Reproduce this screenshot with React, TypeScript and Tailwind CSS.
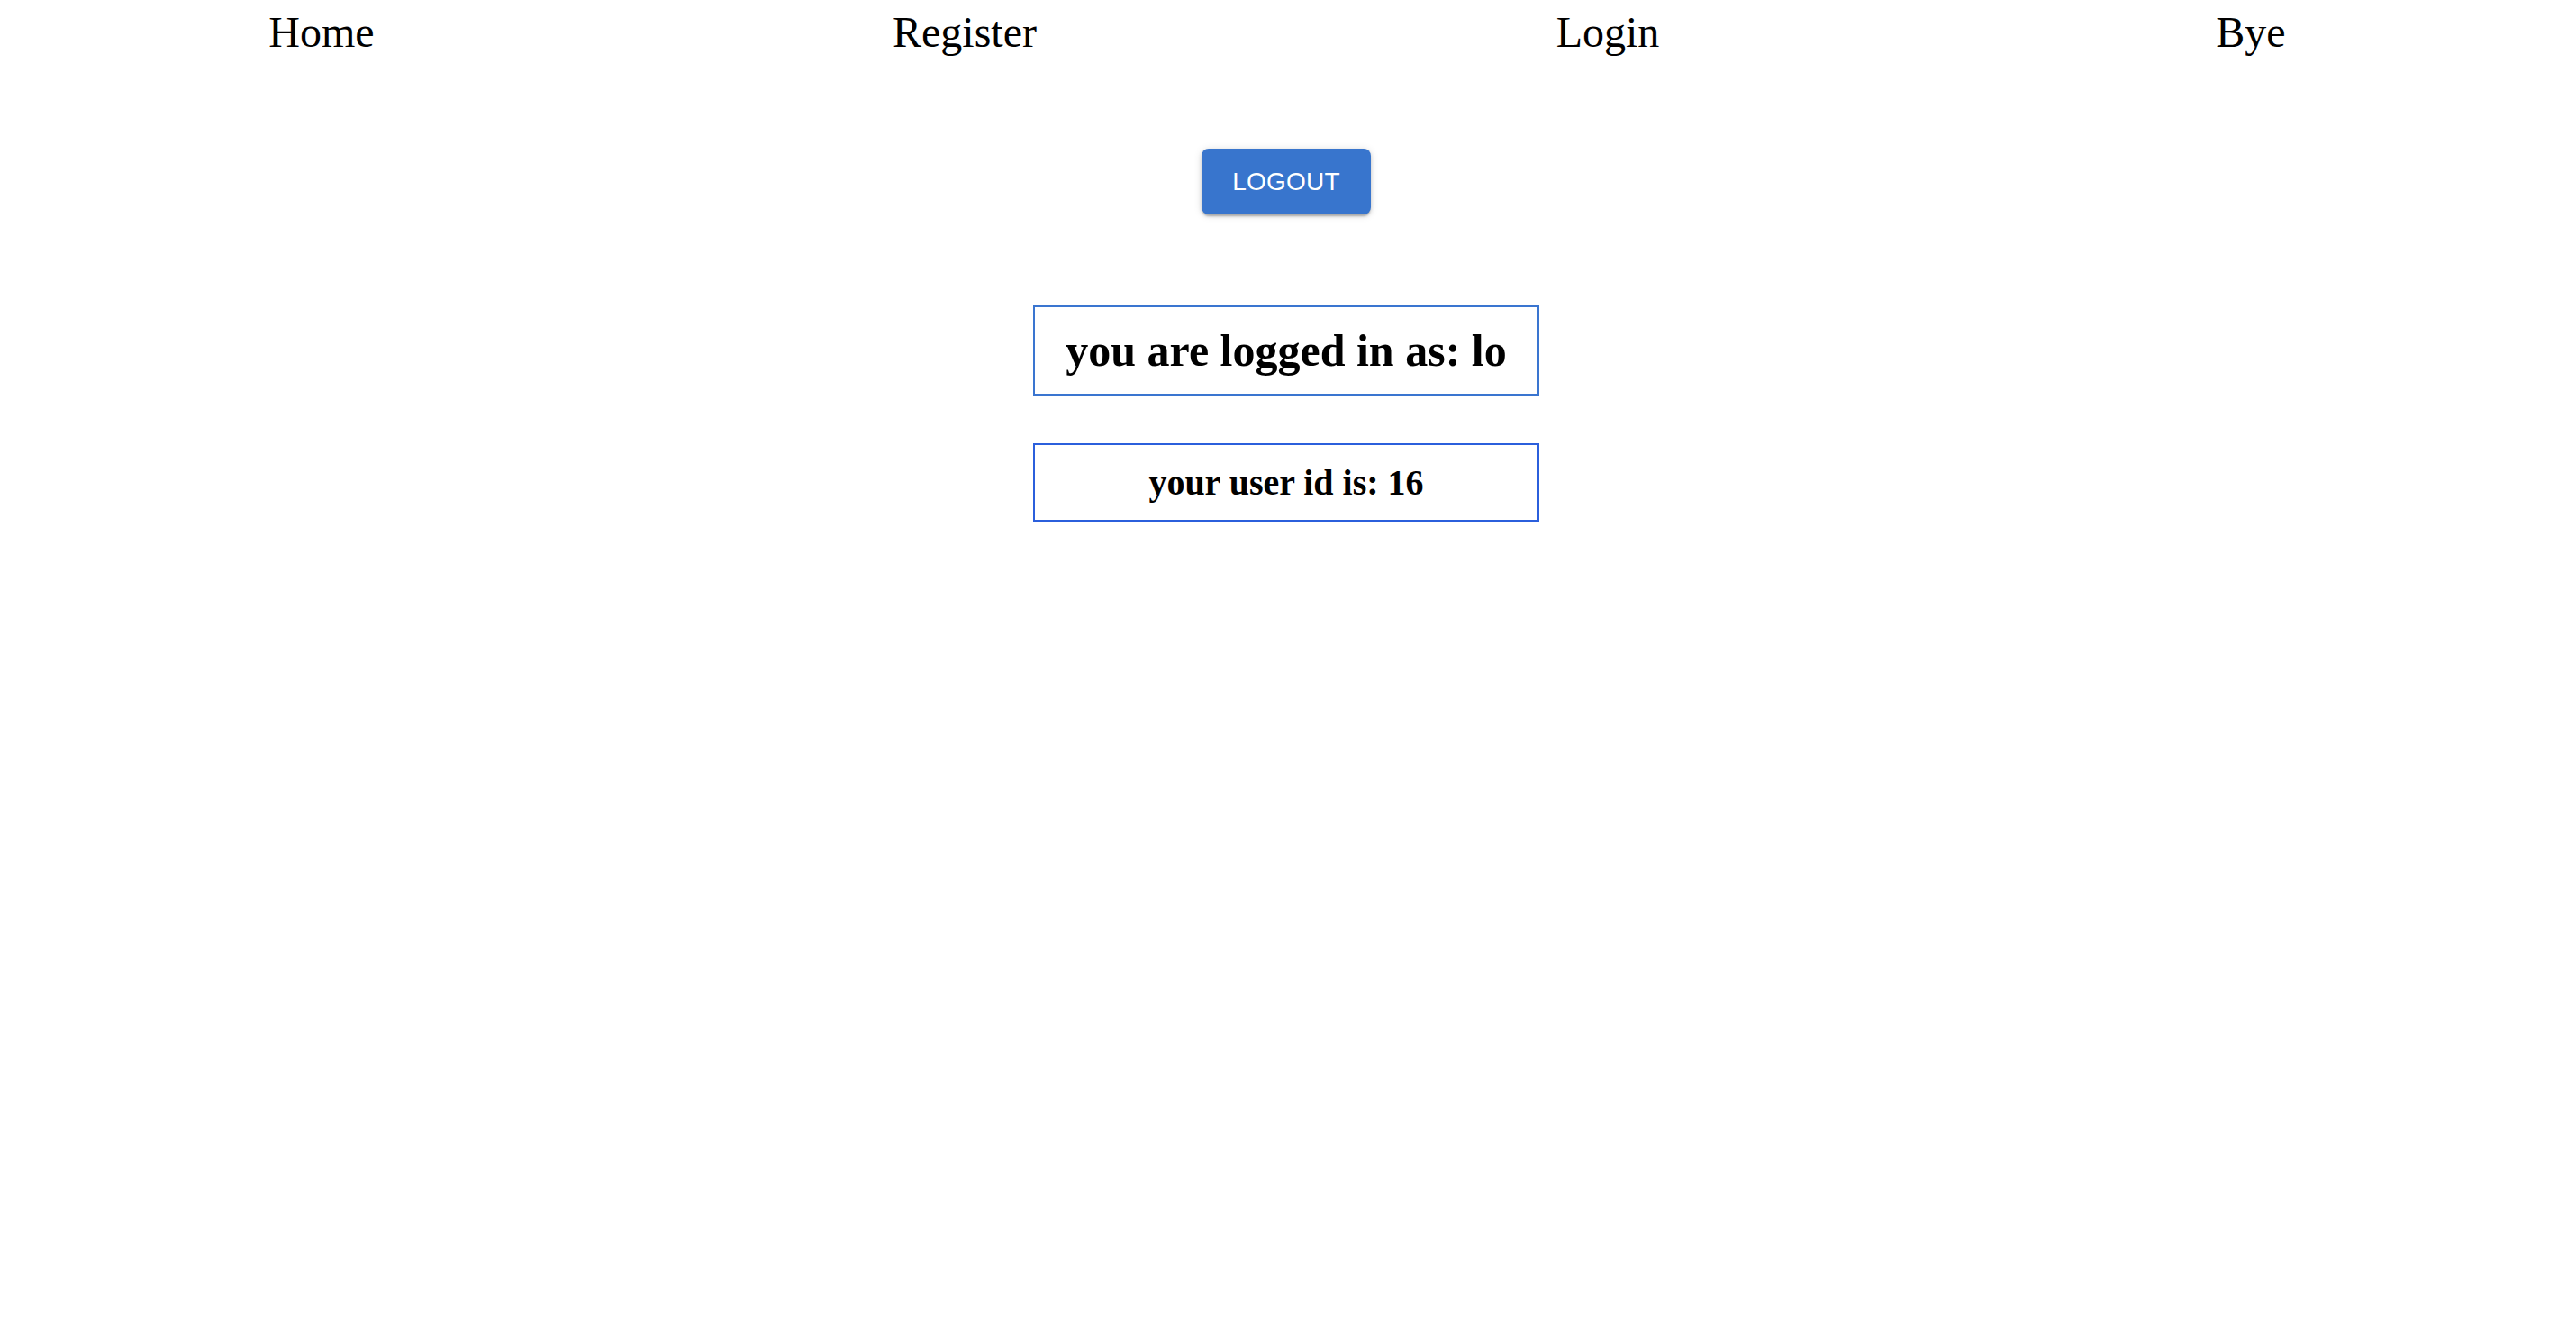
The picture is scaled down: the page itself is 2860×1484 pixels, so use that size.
export default function App() {
  const links = ["Home", "Register", "Login", "Bye"];

  return (
    <div className="min-h-screen bg-white pr-[4px] text-black">
      {/* NAV */}
      <nav className="grid grid-cols-4 pt-2 font-['Liberation_Serif',serif] text-[48px] leading-[55px]">
        {links.map((l) => (
          <a key={l} className="text-center">
            {l}
          </a>
        ))}
      </nav>

      {/* LOGOUT */}
      <div className="mt-[102px] flex justify-center">
        <button className="h-[73px] w-[188px] rounded-[8px] bg-[#3875cd] font-['Liberation_Sans',Arial,sans-serif] text-[28px] tracking-[0.2px] text-white shadow-[0_3px_2px_-1px_rgba(0,0,0,0.2),0_2px_4px_0_rgba(0,0,0,0.14),0_1px_10px_0_rgba(0,0,0,0.12)]">
          LOGOUT
        </button>
      </div>

      {/* INFO */}
      <div className="mt-[101px] flex flex-col items-center gap-[53px] font-['Liberation_Serif',serif] font-bold">
        <div className="flex h-[100px] w-[562px] items-center justify-center border-2 border-[#3a75d0]">
          <h1 className="text-[50px] leading-[57px]">you are logged in as: lo</h1>
        </div>
        <div className="flex h-[87px] w-[562px] items-center justify-center border-2 border-[#2b5fdc]">
          <h2 className="text-[40px] leading-[46px]">your user id is: 16</h2>
        </div>
      </div>
    </div>
  );
}
